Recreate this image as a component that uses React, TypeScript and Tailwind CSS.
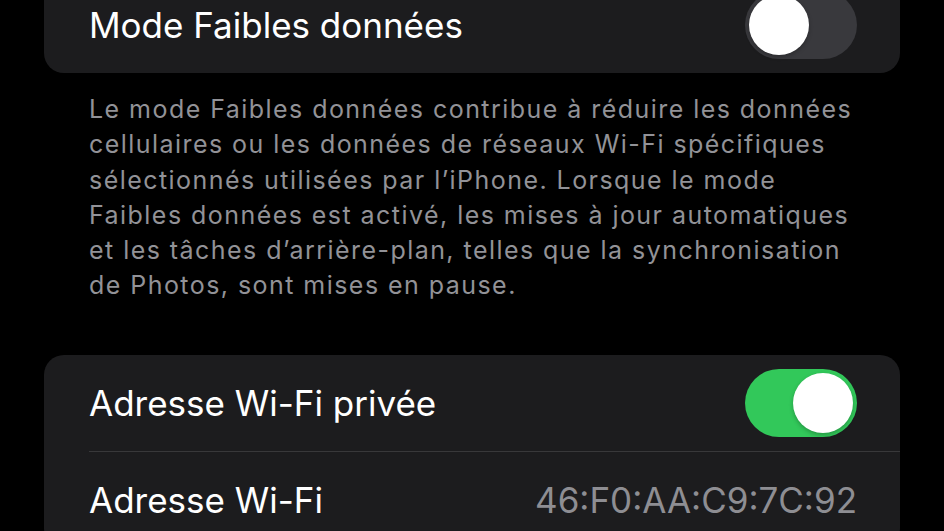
import React from "react";

function Toggle({ on }: { on: boolean }) {
  return (
    <div
      className={
        "flex h-[68px] w-[112px] shrink-0 items-center rounded-full p-[4px] " +
        (on ? "justify-end bg-[#32c85a]" : "justify-start bg-[#39393d]")
      }
    >
      <div className="h-[60px] w-[60px] rounded-full bg-white shadow-[0_2px_4px_rgba(0,0,0,0.25)]" />
    </div>
  );
}

const desc = [
  "Le mode Faibles données contribue à réduire les données",
  "cellulaires ou les données de réseaux Wi-Fi spécifiques",
  "sélectionnés utilisées par l’iPhone. Lorsque le mode",
  "Faibles données est activé, les mises à jour automatiques",
  "et les tâches d’arrière-plan, telles que la synchronisation",
  "de Photos, sont mises en pause.",
];

export default function App() {
  return (
    <div
      className="h-[531px] w-[944px] overflow-hidden bg-black"
      style={{ fontFamily: "Inter, 'Noto Sans', sans-serif" }}
    >
      <div className="mx-[44px] mt-[-23px] rounded-[20px] bg-[#1c1c1e]">
        <div className="flex h-[96px] items-center justify-between pl-[45px] pr-[43px]">
          <span className="text-[35px] text-white">Mode Faibles données</span>
          <Toggle on={false} />
        </div>
      </div>

      <div className="pl-[89px] pt-[19px] text-[25px] leading-[35.3px] tracking-[1.45px] text-[#929297]">
        {desc.map((l) => (
          <div key={l} className="whitespace-nowrap">{l}</div>
        ))}
      </div>

      <div className="mx-[44px] mt-[51px] rounded-[20px] bg-[#1c1c1e]">
        <div className="flex h-[96px] items-center justify-between pl-[45px] pr-[43px]">
          <span className="text-[35px] text-white">Adresse Wi-Fi privée</span>
          <Toggle on={true} />
        </div>
        <div className="ml-[45px] h-px bg-[#38383a]" />
        <div className="flex h-[96px] items-center justify-between pl-[45px] pr-[43px]">
          <span className="text-[35px] text-white">Adresse Wi-Fi</span>
          <span className="text-[35px] text-[#8e8e93]">46:F0:AA:C9:7C:92</span>
        </div>
      </div>
    </div>
  );
}
